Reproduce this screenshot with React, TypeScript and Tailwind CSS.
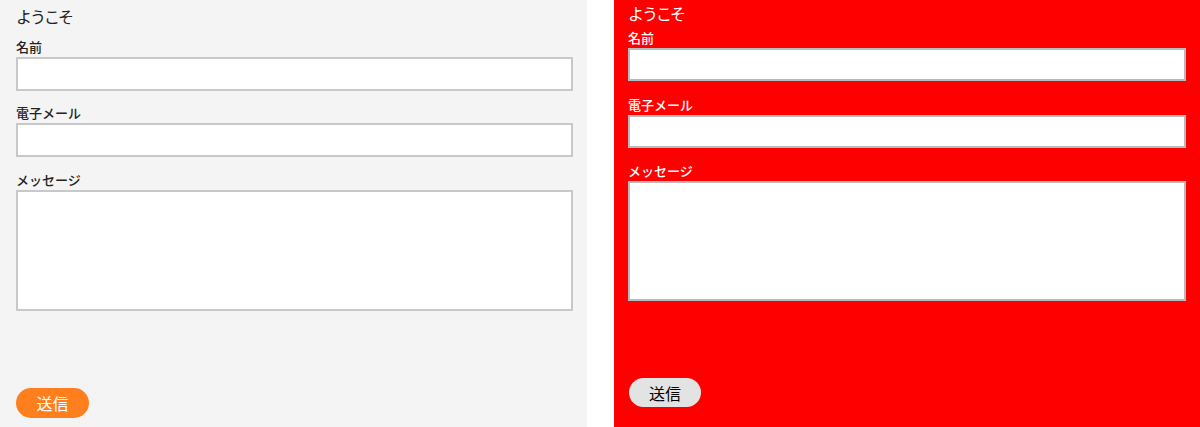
const font = { fontFamily: '"Noto Sans CJK JP", "Noto Sans", sans-serif' };

function Field({
  label,
  className,
  labelClass,
  boxClass,
}: {
  label: string;
  className: string;
  labelClass: string;
  boxClass: string;
}) {
  return (
    <div className={`flex flex-col ${className}`}>
      <label className={`text-[13px] leading-[16px] font-medium ${labelClass}`}>{label}</label>
      <div className={`mt-[2px] bg-white border-2 ${boxClass}`} />
    </div>
  );
}

export default function App() {
  return (
    <div className="flex h-[427px] w-[1200px] bg-white" style={font}>
      <div className="flex w-[587px] flex-col bg-[#f4f4f4] pl-[16px] pr-[14px] pt-[6px]">
        <h1 className="text-[16px] leading-[20px] tracking-[-2px] text-[#222]">ようこそ</h1>
        <Field label="名前" className="mt-[13px]" labelClass="text-[#222]" boxClass="h-[34px] border-[#c8c8c8]" />
        <Field label="電子メール" className="mt-[14px]" labelClass="text-[#222]" boxClass="h-[34px] border-[#c8c8c8]" />
        <Field label="メッセージ" className="mt-[15px]" labelClass="text-[#222]" boxClass="h-[121px] border-[#c8c8c8]" />
        <button className="mt-[77px] h-[30px] w-[73px] rounded-full bg-[#ff7f1f] text-[16px] text-white">
          送信
        </button>
      </div>
      <div className="ml-[27px] flex w-[586px] flex-col bg-[#ff0000] px-[14px] pt-[3px]">
        <h1 className="text-[16px] leading-[20px] tracking-[-2px] text-white">ようこそ</h1>
        <Field label="名前" className="mt-[7px]" labelClass="text-white" boxClass="h-[33px] border-[#b4bcbd]" />
        <Field label="電子メール" className="mt-[16px]" labelClass="text-white" boxClass="h-[33px] border-[#b4bcbd]" />
        <Field label="メッセージ" className="mt-[15px]" labelClass="text-white" boxClass="h-[120px] border-[#b4bcbd]" />
        <button className="ml-[1px] mt-[77px] h-[29px] w-[72px] rounded-full bg-[#e2e4e3] text-[16px] text-black">
          送信
        </button>
      </div>
    </div>
  );
}
